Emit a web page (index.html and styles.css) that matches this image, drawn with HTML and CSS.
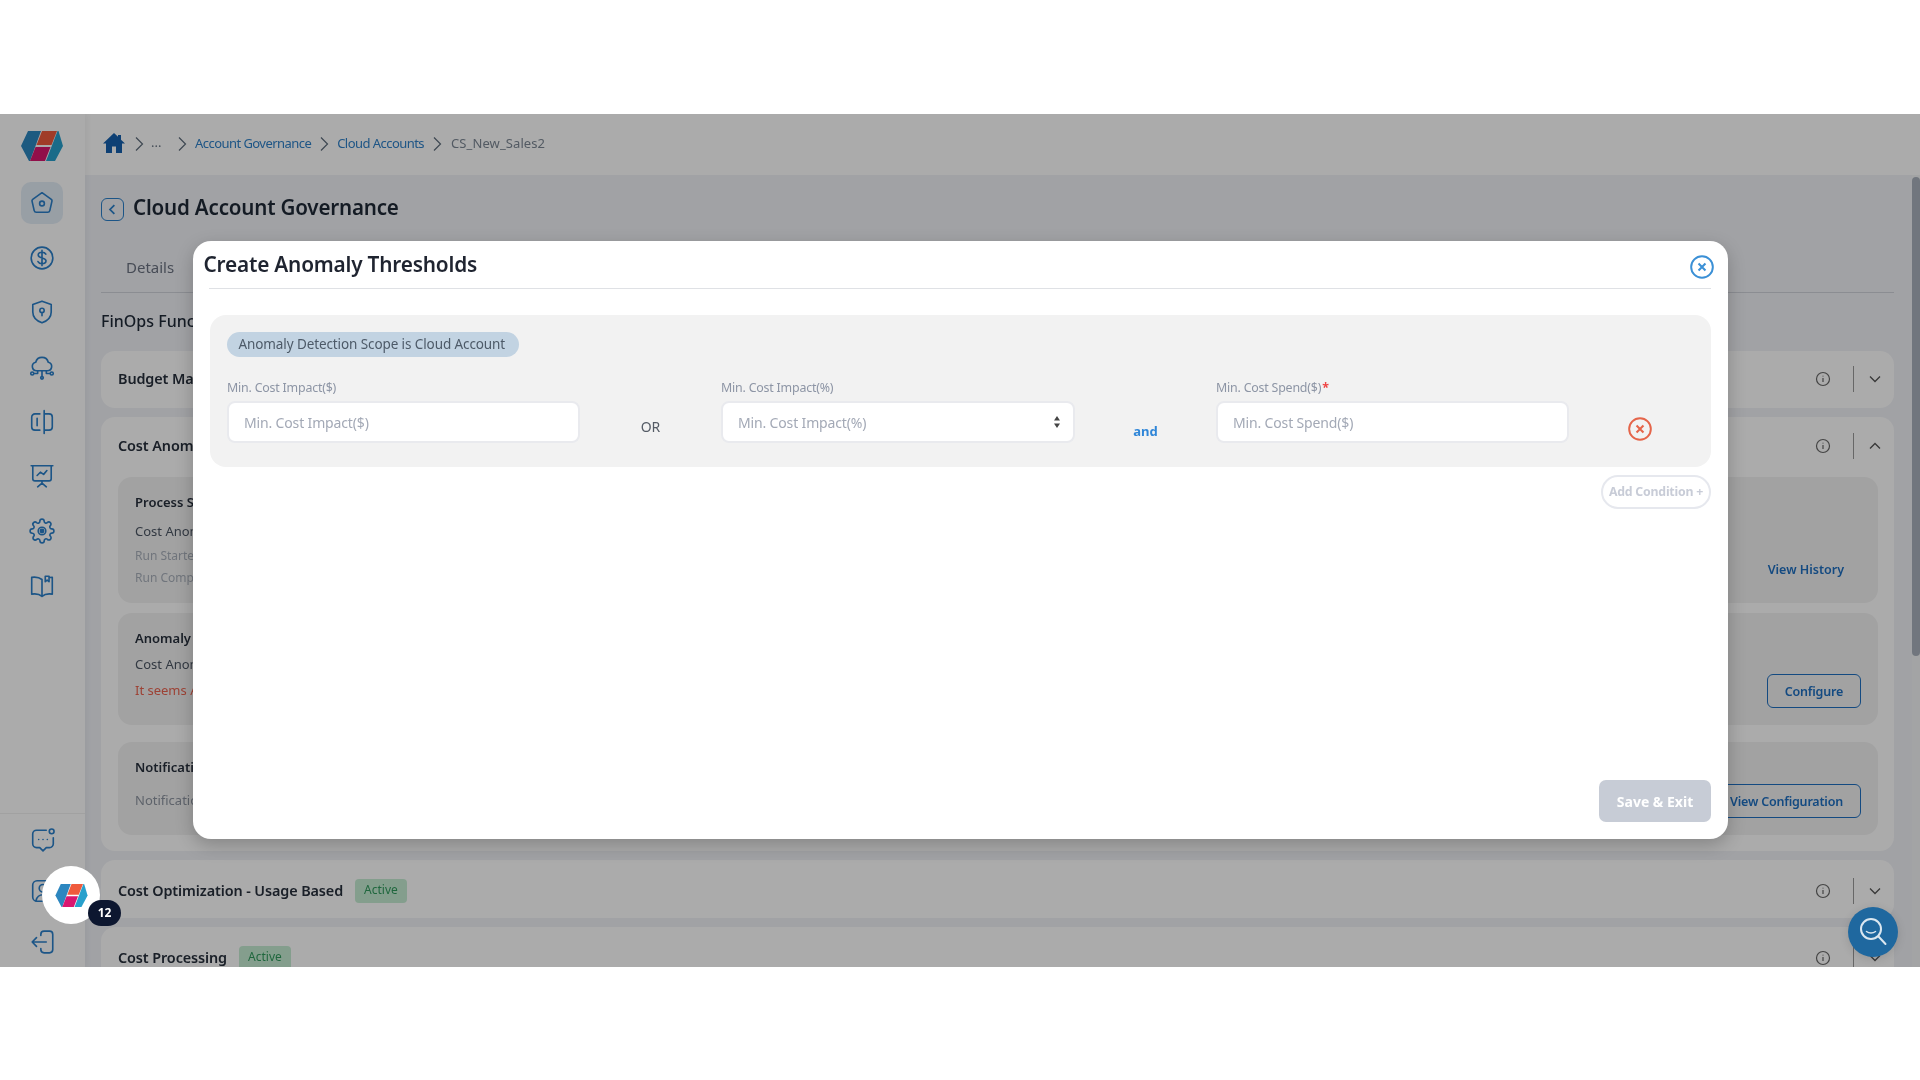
FILE: index.html
```html
<!DOCTYPE html>
<html lang="en">
<head>
  <meta charset="UTF-8">
  <title>Cloud Account Governance</title>
  <link rel="stylesheet" href="styles.css">
</head>
<body>
  <svg class="defs" width="0" height="0">
    <symbol id="logo" viewBox="0 0 42 30">
      <polygon points="0,15 7,0 20,0 9,30 8,30" fill="#2c86bf"/>
      <polygon points="21,0 36,0 30.500,14 15.500,14" fill="#ef5a3c"/>
      <polygon points="14.500,16 29.500,16 24,30 9,30" fill="#d8176f"/>
      <polygon points="37.500,0 36.500,0 25,30 34,30 42,15" fill="#28a0cc"/>
    </symbol>
    <symbol id="info" viewBox="0 0 18 18">
      <circle cx="9" cy="9" r="6.500" fill="none" stroke="currentColor" stroke-width="1.2"/>
      <path d="M9 8v4M9 5.800v.6" fill="none" stroke="currentColor" stroke-width="1.2"/>
    </symbol>
    <symbol id="down" viewBox="0 0 16 16">
      <path d="M3 5.500l5 5 5-5" fill="none" stroke="currentColor" stroke-width="1.3"/>
    </symbol>
    <symbol id="right" viewBox="0 0 14 16">
      <path d="M4 1.500L10.500 8 4 14.500" fill="none" stroke="currentColor" stroke-width="1.200"/>
    </symbol>
    <symbol id="circle-x" viewBox="0 0 24 24">
      <circle cx="12" cy="12" r="10" fill="none" stroke="currentColor" stroke-width="1.8"/>
      <path d="M8.800 8.800l6.400 6.400M15.200 8.800l-6.400 6.400" fill="none" stroke="currentColor" stroke-width="1.9"/>
    </symbol>
  </svg>

  <div class="screen">
    <aside class="sidebar">
      <svg class="logo"><use href="#logo"/></svg>
      <nav class="nav">
        <a class="nav-item active"><svg viewBox="0 0 24 24"><path d="M12 2.500l8.600 6.200a1.500 1.500 0 0 1 .6 1.600l-2 8.700a2 2 0 0 1-2 1.500H6.800a2 2 0 0 1-2-1.500l-2-8.700a1.500 1.500 0 0 1 .6-1.600z"/><circle cx="12" cy="12.500" r="2.200"/></svg></a>
        <a class="nav-item"><svg viewBox="0 0 24 24"><circle cx="12" cy="12" r="10"/><path d="M15.500 8.500c-.6-1.200-2-1.800-3.500-1.800-2 0-3.500 1-3.500 2.600 0 3.500 7.200 1.800 7.200 5.300 0 1.600-1.700 2.700-3.700 2.700-1.600 0-3-.7-3.700-2M12 5v14"/></svg></a>
        <a class="nav-item"><svg viewBox="0 0 24 24"><path d="M12 2l8.500 3v7c0 5-3.700 8.300-8.500 10-4.800-1.700-8.500-5-8.500-10V5z"/><circle cx="12" cy="10.500" r="2"/><path d="M12 12.500V15.500"/></svg></a>
        <a class="nav-item"><svg viewBox="0 0 24 24"><path d="M7 15.500a4 4 0 0 1-.8-7.900 6 6 0 0 1 11.600 0 4 4 0 0 1-.8 7.900z"/><path d="M12 15.500V21M8 15.500v2.500H4.500M16 15.500v2.500h3.500"/><circle cx="3" cy="18" r="1.400"/><circle cx="21" cy="18" r="1.400"/><circle cx="12" cy="22" r="1.200"/></svg></a>
        <a class="nav-item"><svg viewBox="0 0 24 24"><path d="M10 4.500H5.500a3 3 0 0 0-3 3v9a3 3 0 0 0 3 3H10M14 4.500h4.500a3 3 0 0 1 3 3v9a3 3 0 0 1-3 3H14M14 1.500v21M7.500 8.500v7"/></svg></a>
        <a class="nav-item"><svg viewBox="0 0 24 24"><path d="M2 2.500h20M3.500 2.500v12a2 2 0 0 0 2 2h13a2 2 0 0 0 2-2v-12M12 16.500v2M8 22l4-3.500 4 3.500M7.500 11.500l3-3 3 2 3-3.500"/></svg></a>
        <a class="nav-item"><svg viewBox="0 0 24 24"><path d="M19.400 15a1.650 1.650 0 0 0 .33 1.820l.06.06a2 2 0 1 1-2.830 2.830l-.06-.06a1.650 1.650 0 0 0-1.820-.33 1.650 1.650 0 0 0-1 1.510V21a2 2 0 1 1-4 0v-.09A1.650 1.650 0 0 0 9 19.400a1.650 1.650 0 0 0-1.820.33l-.06.06a2 2 0 1 1-2.830-2.830l.06-.06a1.650 1.650 0 0 0 .33-1.820 1.650 1.650 0 0 0-1.510-1H3a2 2 0 1 1 0-4h.09A1.650 1.650 0 0 0 4.600 9a1.650 1.650 0 0 0-.33-1.820l-.06-.06a2 2 0 1 1 2.830-2.830l.06.06a1.650 1.650 0 0 0 1.820.33H9a1.650 1.650 0 0 0 1-1.510V3a2 2 0 1 1 4 0v.09a1.650 1.650 0 0 0 1 1.510 1.650 1.650 0 0 0 1.820-.33l.06-.06a2 2 0 1 1 2.830 2.830l-.06.06a1.650 1.650 0 0 0-.33 1.820V9a1.650 1.650 0 0 0 1.510 1H21a2 2 0 1 1 0 4h-.09a1.650 1.650 0 0 0-1.510 1z"/><circle cx="12" cy="12" r="3.500"/><circle class="solid" cx="12" cy="12" r="1.500"/></svg></a>
        <a class="nav-item"><svg viewBox="0 0 24 24"><path d="M12 6C9.500 4 6 3.500 2.500 4v15.500c3.500-.5 7-.2 9.500 2 2.500-2.200 6-2.500 9.500-2V4c-1 0-2 0-3 .1M12 6v15.500M15 8V3h3.500v5l-1.750-1.500z"/></svg></a>
      </nav>
      <div class="nav-bottom">
        <a class="nav-item"><svg viewBox="0 0 24 24"><path d="M15 3H6a3.500 3.500 0 0 0-3.500 3.500v9A3.500 3.500 0 0 0 6 19h3l3 3 3-3h3a3.500 3.500 0 0 0 3.500-3.500V10M8 11.500h.01M12 11.500h.01M16 11.500h.01"/><circle cx="20" cy="4" r="2.200"/></svg></a>
        <a class="nav-item"><svg viewBox="0 0 24 24"><rect x="2.500" y="2.500" width="19" height="19" rx="4"/><circle cx="12" cy="9.500" r="3.500"/><path d="M5.500 21c.8-3.500 3.300-5.500 6.500-5.500s5.700 2 6.500 5.500"/></svg></a>
        <a class="nav-item"><svg viewBox="0 0 24 24"><path d="M10 6V5a3 3 0 0 1 3-3h5a3 3 0 0 1 3 3v14a3 3 0 0 1-3 3h-5a3 3 0 0 1-3-3v-1M15 12H2M6 8l-4 4 4 4"/></svg></a>
      </div>
    </aside>

    <div class="page">
      <header class="crumbs">
        <svg class="home-icon" viewBox="0 0 24 24"><path d="M12 2L1 12.500h3V22h6v-6.500h4V22h6v-9.500h3l-4-3.800V4h-3v1.800z"/></svg>
        <svg class="sep"><use href="#right"/></svg>
        <span class="crumb-dots">...</span>
        <svg class="sep"><use href="#right"/></svg>
        <a class="crumb">Account Governance</a>
        <svg class="sep"><use href="#right"/></svg>
        <a class="crumb">Cloud Accounts</a>
        <svg class="sep"><use href="#right"/></svg>
        <span class="crumb-last">CS_New_Sales2</span>
      </header>

      <div class="body-row">
        <main class="content">
          <div class="page-title">
            <span class="back"><svg viewBox="0 0 12 12"><path d="M7.500 2.500L4 6l3.500 3.500"/></svg></span>
            <h1>Cloud Account Governance</h1>
          </div>
          <div class="tabs"><span class="tab">Details</span></div>
          <h2 class="section-title">FinOps Functions</h2>

          <section class="card">
            <div class="card-head">
              <span class="card-title">Budget Management</span>
              <svg class="info"><use href="#info"/></svg><i class="vline"></i><svg class="chev"><use href="#down"/></svg>
            </div>
          </section>

          <section class="card card-open">
            <div class="card-head">
              <span class="card-title">Cost Anomaly Detection</span>
              <svg class="info"><use href="#info"/></svg><i class="vline"></i><svg class="chev flip"><use href="#down"/></svg>
            </div>
            <div class="inner inner-process">
              <div>
                <div class="inner-title">Process Status</div>
                <div class="inner-text">Cost Anomaly Detection</div>
                <div class="inner-small">Run Started</div>
                <div class="inner-small small-2">Run Completed</div>
              </div>
              <a class="link-btn">View History</a>
            </div>
            <div class="inner inner-anomaly">
              <div>
                <div class="inner-title">Anomaly Thresholds</div>
                <div class="inner-text">Cost Anomaly Thresholds</div>
                <div class="inner-text warn">It seems Anomaly Thresholds are not set</div>
              </div>
              <a class="outline-btn">Configure</a>
            </div>
            <div class="inner inner-notify">
              <div>
                <div class="inner-title">Notification</div>
                <div class="inner-text muted notify-line">Notification Configuration</div>
              </div>
              <a class="outline-btn">View Configuration</a>
            </div>
          </section>

          <section class="card">
            <div class="card-head card-head-low">
              <span class="card-title">Cost Optimization - Usage Based</span>
              <span class="badge">Active</span>
              <svg class="info"><use href="#info"/></svg><i class="vline"></i><svg class="chev"><use href="#down"/></svg>
            </div>
          </section>

          <section class="card">
            <div class="card-head card-head-low">
              <span class="card-title">Cost Processing</span>
              <span class="badge">Active</span>
              <svg class="info"><use href="#info"/></svg><i class="vline"></i><svg class="chev"><use href="#down"/></svg>
            </div>
          </section>
        </main>
        <div class="scrollbar"><div class="thumb"></div></div>
      </div>
    </div>

    <div class="dim"></div>

    <div class="modal">
      <div class="modal-head">
        <h3>Create Anomaly Thresholds</h3>
        <svg class="modal-close"><use href="#circle-x"/></svg>
      </div>
      <div class="panel">
        <span class="scope">Anomaly Detection Scope is Cloud Account</span>
        <div class="fields">
          <label class="field">
            <span class="field-label">Min. Cost Impact($)</span>
            <input type="text" placeholder="Min. Cost Impact($)">
          </label>
          <span class="joiner">OR</span>
          <label class="field">
            <span class="field-label">Min. Cost Impact(%)</span>
            <input type="text" placeholder="Min. Cost Impact(%)">
            <svg class="spinner" viewBox="0 0 8 14"><path d="M4 1l3 4.500H1zM4 13L1 8.500h6z"/></svg>
          </label>
          <span class="joiner and">and</span>
          <label class="field">
            <span class="field-label">Min. Cost Spend($) <b>*</b></span>
            <input type="text" placeholder="Min. Cost Spend($)">
          </label>
          <svg class="remove"><use href="#circle-x"/></svg>
        </div>
      </div>
      <div class="add-row"><button class="add-btn">Add Condition +</button></div>
      <div class="modal-foot"><button class="save-btn">Save &amp; Exit</button></div>
    </div>

    <div class="widget">
      <svg class="widget-logo"><use href="#logo"/></svg>
      <span class="widget-count">12</span>
    </div>

    <div class="fab">
      <svg viewBox="0 0 32 32"><circle cx="14" cy="13" r="10"/><path d="M21.500 20.500l7 7.500"/><path class="fab-smile" d="M9.500 15.500c2.500 2 6.500 2 9 0"/></svg>
    </div>
  </div>
</body>
</html>
```

FILE: styles.css
```css
* { box-sizing: border-box; }
html, body { margin: 0; height: 100%; background: #fff; overflow: hidden; }
body { font-family: "Noto Sans", sans-serif; color: #1f2937; }
.defs { position: absolute; }
h1, h2, h3 { margin: 0; }

.screen {
  position: relative;
  display: flex;
  margin-top: 114px;
  height: 853px;
  overflow: hidden;
  filter: blur(0.7px);
}

/* sidebar */
.sidebar {
  width: 85px;
  flex: none;
  background: #ffffff;
  display: flex;
  flex-direction: column;
  align-items: center;
  box-shadow: 2px 0 6px rgba(0,0,0,0.05);
  z-index: 1;
}
.logo { width: 42px; height: 30px; margin-top: 17px; margin-left: -1px; }
.nav { display: flex; flex-direction: column; gap: 12.7px; margin-top: 21px; margin-left: -1px; }
.nav-item {
  width: 42px;
  height: 42px;
  display: flex;
  align-items: center;
  justify-content: center;
  border-radius: 10px;
}
.nav-item.active { background: #e3edf7; }
.nav-item svg {
  width: 26px;
  height: 26px;
  fill: none;
  stroke: #2a7fc9;
  stroke-width: 1.5;
  stroke-linecap: round;
  stroke-linejoin: round;
}
.nav-item .solid { fill: #2a7fc9; }
.nav-bottom {
  margin-top: auto;
  width: 100%;
  border-top: 1px solid #f1f1f1;
  display: flex;
  flex-direction: column;
  align-items: center;
  gap: 9px;
  padding: 5px 0 4px;
}

/* page */
.page { flex: 1; min-width: 0; display: flex; flex-direction: column; background: #f0f2f7; }
.crumbs {
  height: 61px;
  flex: none;
  background: #fff;
  display: flex;
  align-items: center;
  padding: 0 0 3px 17px;
  font-size: 13px;
}
.home-icon { width: 24px; height: 24px; fill: #1560ad; margin-right: 0; }
.sep { color: #5d6b7a; width: 14px; height: 16px; margin: 2px 5.5px 0; flex: none; }
.crumb-dots { color: #6b7785; width: 18px; margin-top: -2px; }
.crumb { color: #2f80c8; letter-spacing: -0.55px; margin-left: 1px; }
.crumb-last { color: #7c8794; letter-spacing: 0.1px; margin-left: 2px; }

.body-row { flex: 1; min-height: 0; display: flex; }
.content { flex: 1; min-width: 0; padding: 18px 18px 0 16px; }
.scrollbar { width: 8px; flex: none; background: #f4f5f7; padding-top: 2px; }
.thumb { height: 479px; background: #a9b1bd; border-radius: 4px; }

.page-title { display: flex; align-items: center; gap: 9px; height: 28px; }
.back {
  width: 23px;
  height: 23px;
  margin-top: 5px;
  border: 1.5px solid #2a7fc9;
  border-radius: 6px;
  display: flex;
  align-items: center;
  justify-content: center;
}
.back svg { width: 15px; height: 15px; fill: none; stroke: #2a7fc9; stroke-width: 1.4; }
.page-title h1 { font-size: 20.6px; font-weight: 600; color: #1f2937; letter-spacing: -0.2px; }

.tabs {
  margin-top: 32px;
  height: 40px;
  border-bottom: 1px solid #cfd3da;
  padding-left: 25px;
}
.tab { font-size: 15px; line-height: 28px; color: #6b7280; }
.section-title { margin-top: 16px; font-size: 16px; font-weight: 500; line-height: 24px; color: #1f2937; }

.card { background: #fff; border-radius: 14px; margin-top: 9px; padding: 0 16px 0 17px; }
.card-open { padding-bottom: 16px; }
.card-open .card-head { padding-bottom: 0; }
.section-title + .card { margin-top: 18px; }
.card-head { height: 57px; padding-bottom: 2px; display: flex; align-items: center; margin-right: -5px; }
.card-head-low { height: 58px; padding: 3px 0 0; }
.card-title { font-size: 14.4px; font-weight: 600; color: #28303d; letter-spacing: -0.1px; }
.badge {
  margin-left: 12px;
  height: 24px;
  line-height: 22px;
  padding: 0 9px;
  font-size: 12px;
  color: #2f9a5c;
  background: #c5ecd3;
  border-radius: 4px;
}
.info { width: 18px; height: 18px; color: #666; margin-left: auto; }
.vline { width: 1px; height: 26px; background: #9a9a9a; margin: 0 13px 0 21px; }
.chev { width: 16px; height: 16px; color: #555; }
.chev.flip { transform: rotate(180deg); }

.inner {
  background: #f2f2f2;
  border-radius: 14px;
  padding: 16px 17px 17px;
  display: flex;
  justify-content: space-between;
  align-items: flex-end;
}
.inner > div { align-self: flex-start; }
.inner-process { margin-top: 3px; height: 126px; }
.inner-anomaly { margin-top: 10px; height: 112px; }
.inner-notify { margin-top: 17px; height: 93px; }
.inner-title { font-size: 13px; font-weight: 600; line-height: 18px; color: #28303d; }
.inner-text { font-size: 13px; line-height: 18px; margin-top: 8px; color: #4b5563; }
.inner-process .inner-text { margin-top: 11px; }
.inner-small { font-size: 12px; line-height: 16px; margin-top: 8px; color: #a8afba; }
.small-2 { margin-top: 6px; }
.warn { color: #ea6350; }
.muted { color: #8d94a0; }
.link-btn, .outline-btn {
  height: 34px;
  display: flex;
  align-items: center;
  font-size: 12.5px;
  font-weight: 600;
  color: #1f6fc0;
  padding: 0 17px;
}
.outline-btn { border: 1.5px solid #1f6fc0; border-radius: 6px; letter-spacing: -0.2px; }
.inner .notify-line { margin-top: 15px; }

.dim { position: absolute; inset: 0; background: rgba(0,0,0,0.33); z-index: 2; }

/* modal */
.modal {
  position: absolute;
  left: 192.5px;
  top: 127px;
  width: 1535.5px;
  height: 598px;
  background: #fff;
  border-radius: 18px;
  box-shadow: 0 6px 18px rgba(0,0,0,0.22);
  z-index: 3;
  display: flex;
  flex-direction: column;
  padding: 0 17px 17px 17px;
}
.modal-head {
  height: 48px;
  margin-left: -6px;
  display: flex;
  align-items: center;
  justify-content: space-between;
  position: relative;
}
.modal-head::after {
  content: "";
  position: absolute;
  left: 5px;
  right: 0;
  bottom: 0;
  height: 1px;
  background: #dfe1e5;
}
.modal-head h3 { font-size: 20.8px; font-weight: 600; color: #1f2430; letter-spacing: -0.2px; margin-top: -2px; }
.modal-close { width: 26px; height: 26px; color: #3b90d6; margin-right: -4px; margin-top: 4px; }

.panel {
  margin-top: 26px;
  height: 152px;
  background: #f2f2f2;
  border-radius: 16px;
  padding: 17px 17px 0;
}
.scope {
  display: block;
  width: fit-content;
  height: 25px;
  line-height: 24px;
  padding: 0 14px 0 12px;
  background: #c2d3e2;
  border-radius: 13px;
  font-size: 13.5px;
  color: #4d5a68;
  letter-spacing: -0.1px;
}
.fields {
  display: grid;
  grid-template-columns: 353px 141px 354px 141px 353px 142px;
  align-items: end;
  margin-top: 23px;
  margin-left: 0.5px;
}
.field { position: relative; display: block; }
.field-label { display: block; font-size: 12.4px; line-height: 16px; color: #8d95a5; margin-bottom: 5px; letter-spacing: -0.2px; }
.field-label b { color: #ef4444; font-weight: 700; margin-left: -2px; }
.field input {
  display: block;
  width: 100%;
  height: 42px;
  border: 2px solid #e9eaee;
  border-radius: 8px;
  background: #fff;
  padding: 0 15px;
  font: 14px "Noto Sans", sans-serif;
  letter-spacing: -0.15px;
  outline: none;
}
.field input::placeholder { color: #a3a9b6; opacity: 1; }
.spinner { position: absolute; right: 14px; bottom: 14px; width: 8px; height: 14px; fill: #444; }
.joiner { text-align: center; font-size: 14px; color: #555c66; padding-bottom: 7px; }
.joiner.and { font-size: 13px; font-weight: 700; color: #2f86d8; padding-bottom: 3px; }
.remove { width: 26px; height: 26px; color: #e5654a; justify-self: center; margin-bottom: 1px; }

.add-row { display: flex; justify-content: flex-end; margin-top: 8px; }
.add-btn {
  width: 110px;
  height: 34px;
  border: 2px solid #e6e8ee;
  border-radius: 17px;
  background: #fff;
  font: 700 12.3px "Noto Sans", sans-serif;
  color: #c8ccd7;
  padding: 0 0 2px;
  letter-spacing: -0.2px;
}
.modal-foot { margin-top: auto; display: flex; justify-content: flex-end; }
.save-btn {
  width: 112px;
  height: 42px;
  border: none;
  border-radius: 7px;
  background: #c7ccd6;
  color: #fff;
  font: 700 14px "Noto Sans", sans-serif;
}

/* floating stuff above the dim layer */
.widget {
  position: absolute;
  left: 42px;
  top: 752px;
  width: 58px;
  height: 58px;
  border-radius: 50%;
  background: #fff;
  z-index: 4;
  display: flex;
  align-items: center;
  justify-content: center;
}
.widget-logo { width: 33px; height: 23px; }
.widget-count {
  position: absolute;
  left: 46px;
  top: 34px;
  width: 33px;
  height: 26px;
  border-radius: 13px;
  background: #0d1730;
  color: #fff;
  font-size: 12px;
  font-weight: 700;
  line-height: 26px;
  text-align: center;
}
.fab {
  position: absolute;
  left: 1848px;
  top: 793px;
  width: 50px;
  height: 50px;
  border-radius: 50%;
  background: #1f689f;
  box-shadow: 0 2px 10px rgba(0,0,0,0.12);
  z-index: 4;
  display: flex;
  align-items: center;
  justify-content: center;
}
.fab svg { width: 32px; height: 32px; fill: none; stroke: #dbe7f0; stroke-width: 2; stroke-linecap: round; }
.fab svg .fab-smile { stroke-width: 1.5; }
```
